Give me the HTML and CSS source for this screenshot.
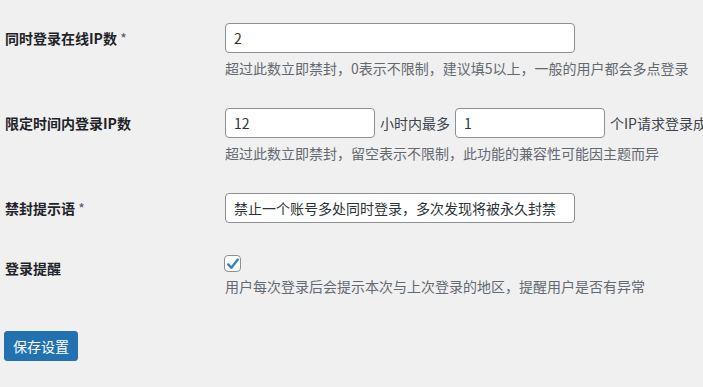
FILE: index.html
```html
<!DOCTYPE html>
<html lang="zh-CN">
<head>
<meta charset="utf-8">
<title>设置</title>
<link rel="stylesheet" href="styles.css">
</head>
<body>
<div class="wrap">
  <div class="form-table">
    <div class="row">
      <div class="th">同时登录在线IP数 <span class="req">*</span></div>
      <div class="td">
        <input class="field regular" type="text" value="2">
        <p class="desc">超过此数立即禁封，0表示不限制，建议填5以上，一般的用户都会多点登录</p>
      </div>
    </div>
    <div class="row">
      <div class="th">限定时间内登录IP数</div>
      <div class="td">
        <div class="inline-row">
          <input class="field small" type="text" value="12">
          <span class="inline-text">小时内最多</span>
          <input class="field small" type="text" value="1">
          <span class="inline-text">个IP请求登录成功</span>
        </div>
        <p class="desc">超过此数立即禁封，留空表示不限制，此功能的兼容性可能因主题而异</p>
      </div>
    </div>
    <div class="row">
      <div class="th">禁封提示语 <span class="req">*</span></div>
      <div class="td">
        <input class="field regular" type="text" value="禁止一个账号多处同时登录，多次发现将被永久封禁">
      </div>
    </div>
    <div class="row">
      <div class="th">登录提醒</div>
      <div class="td">
        <span class="checkbox"><svg width="14" height="14" viewBox="0 0 14 14"><path d="M2.2 7.4 L5.4 10.8 L11.8 2.6" fill="none" stroke="#3582c4" stroke-width="2.4" stroke-linecap="round" stroke-linejoin="round"/></svg></span>
        <p class="desc desc-check">用户每次登录后会提示本次与上次登录的地区，提醒用户是否有异常</p>
      </div>
    </div>
  </div>
  <div class="submit">
    <button class="button-primary" type="button">保存设置</button>
  </div>
</div>
</body>
</html>
```
FILE: styles.css
```css
html, body {
  margin: 0;
  padding: 0;
  background: #f0f0f1;
  overflow: hidden;
}
body {
  font-family: "Noto Sans CJK SC", "Noto Sans", sans-serif;
  font-size: 14px;
  line-height: 20px;
  color: #1d2327;
}
.wrap {
  padding: 8px 0 0 5px;
}
.row {
  display: grid;
  grid-template-columns: 210px minmax(0, 1fr);
}
.th {
  padding: 20px 0;
  font-weight: 600;
  white-space: nowrap;
}
.req {
  font-weight: 400;
  color: #50575e;
}
.td {
  padding: 15px 10px;
  white-space: nowrap;
}
.field {
  box-sizing: border-box;
  height: 30px;
  margin: 0;
  padding: 0 8px;
  border: 1px solid #8c8f94;
  border-radius: 4px;
  background: #fff;
  font-family: inherit;
  font-size: 14px;
  color: #2c3338;
  display: block;
}
.regular { width: 350px; }
.small { width: 150px; flex: none; }
.inline-row {
  display: flex;
  align-items: center;
  gap: 5px;
}
.inline-text {
  color: #3c434a;
  flex: none;
}
.desc {
  margin: 5px 0 0;
  color: #646970;
}
.checkbox {
  box-sizing: border-box;
  display: flex;
  align-items: center;
  justify-content: center;
  width: 17px;
  height: 17px;
  margin: 2px 0 0 -1px;
  border: 1px solid #8c8f94;
  border-radius: 4px;
  background: #fff;
}
.desc-check {
  margin-top: 4px;
}
.submit {
  padding-top: 20px;
  margin-left: -1px;
}
.button-primary {
  box-sizing: border-box;
  height: 30px;
  padding: 0 8px;
  border: 1px solid #2271b1;
  border-radius: 3px;
  background: #2271b1;
  color: #fff;
  font-family: inherit;
  font-size: 14px;
  line-height: 28px;
  cursor: pointer;
}
```
